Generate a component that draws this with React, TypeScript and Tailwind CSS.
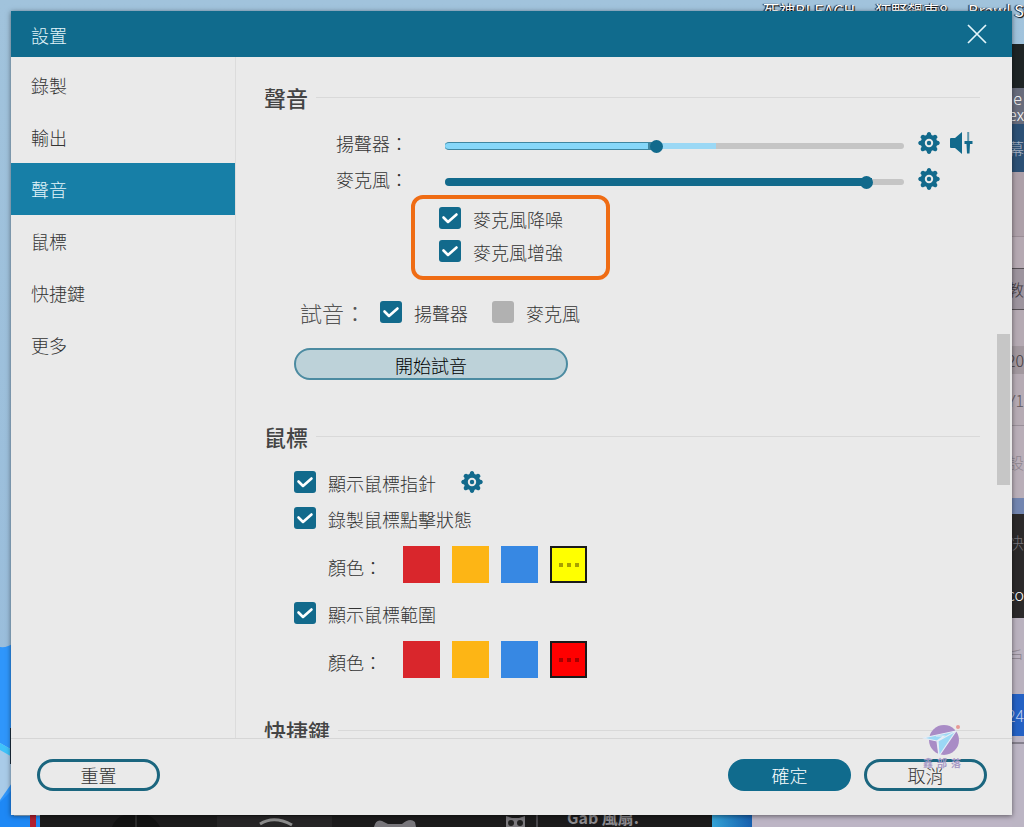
import { FC, ReactNode, useState } from "react";

const menu = ["錄製", "輸出", "聲音", "鼠標", "快捷鍵", "更多"];

// strips of the windows that stay visible right of the dialog
const sideStrips = [
  { id: "sky", text: "", style: "h-11" },
  { id: "bar", text: "", style: "h-11 bg-[#1e2425]" },
  { id: "name", text: "ue lex", style: "h-9 bg-[#686c7c] text-white" },
  { id: "screen", text: "幕", style: "h-12 bg-[#2c5075] text-[#a9b3c4]" },
  { id: "a", text: "", style: "h-16 bg-[#ada0a9]" },
  { id: "b", text: "", style: "h-8 bg-[#b5a9b2] border-t border-[#9a8d96]" },
  { id: "c", text: "教", style: "h-[42px] bg-[#9d949e] border-y border-[#555055] text-[#3d383d]" },
  { id: "d", text: "", style: "h-9 bg-[#b5aab3]" },
  { id: "e", text: "20", style: "h-7 bg-[#a2989f] text-[#443e44]" },
  { id: "f", text: "Y1", style: "h-[52px] bg-[#b6abb4] border-b border-[#9a909a] text-[#5f5860]" },
  { id: "g", text: "設", style: "h-[72px] bg-[#b9aeb8] text-[#8f8791]" },
  { id: "h", text: "", style: "h-4 bg-[#7285b0]" },
  { id: "i", text: "快", style: "h-14 bg-[#2b292a] text-[#77747a]" },
  { id: "j", text: "co", style: "h-12 bg-[#2b292a] text-white" },
  { id: "k", text: "戶", style: "h-[76px] bg-[#bab2bf] text-[#8a828d]" },
  { id: "l", text: "24", style: "h-[42px] bg-[#2461c4] text-[#c6d3f0]" },
  { id: "m", text: "", style: "h-2 border-b-2 border-[#85808d] bg-[#bcb5c4]" },
  { id: "n", text: "", style: "grow bg-[#bcb5c4]" },
];

const Desktop: FC = () => (
  <div
    aria-hidden="true"
    className="absolute inset-0 overflow-hidden bg-gradient-to-b from-[#a1c3dc] to-[#98bcdb]"
  >
    <svg className="absolute bottom-0 left-0 h-[187px] w-10" viewBox="0 0 40 187">
      <path d="M0 7Q7 8 14 3V187H0Z" fill="#2f96fb" />
      <path d="M0 103L14 111V140L0 160Z" fill="#a9cbe8" />
      <path d="M0 103L14 111V118L0 110Z" fill="#3fc2fa" />
      <path d="M0 162L14 148V176H40V187H0Z" fill="#1e88f5" />
      <path d="M10 88H12V124H10Z" fill="#1d3040" />
      <path d="M30 170H36V187H30Z" fill="#b3202f" />
    </svg>
    <div className="absolute right-0 bottom-0 left-10 flex h-4 bg-[#bdb5c5]">
      <div className="relative w-[672px] overflow-hidden bg-[#1c1b1c]">
        <svg className="absolute inset-0 h-4 w-full" viewBox="0 0 672 16">
          <path d="M72 16Q76 6 84 4H108Q116 8 120 16Z" fill="#121212" />
          <path d="M96 4V16" stroke="#444" />
          <path d="M177 5H292V16H177Z" fill="#262526" />
          <path d="M220 13Q234 4 252 14" stroke="#8b8b8b" strokeWidth="3" fill="none" />
          <path d="M334 16Q336 8 342 10L348 13H362Q370 6 375 11L376 16Z" fill="#77757a" />
          <path d="M466 5L472 7H479L485 5V16H466Z" fill="#7b797d" />
          <circle cx="471" cy="12" r="3" fill="#222" />
          <circle cx="480" cy="12" r="3" fill="#222" />
          <path d="M497 4V16" stroke="#77757a" />
        </svg>
        <span className="absolute bottom-0 left-[527px] text-base leading-5 font-bold text-[#8d8b8f]">
          Gab 風扇.
        </span>
      </div>
      <div className="w-10 bg-gradient-to-r from-[#35a3d6] to-[#175fae]" />
    </div>
    <div className="absolute inset-y-0 right-0 flex w-3 flex-col text-base leading-4">
      {sideStrips.map((strip) => (
        <div
          key={strip.id}
          className={`flex shrink-0 flex-wrap items-center justify-end overflow-hidden ${strip.style}`}
        >
          {strip.text}
        </div>
      ))}
    </div>
    <div className="absolute top-0 right-0 flex gap-5 text-base leading-5 font-normal whitespace-nowrap text-white [text-shadow:1px_1px_1px_#000,-1px_0_1px_#000]">
      <span>死神BLEACH</span>
      <span>狂野飆車8</span>
      <span className="w-14">Brawl St</span>
    </div>
  </div>
);

type CheckProps = { label: string; on?: boolean };

const Check: FC<CheckProps> = ({ label, on = true }) => {
  const [checked, setChecked] = useState(on);
  return (
    <label className="flex items-center gap-3">
      <span className="relative flex size-[22px]">
        <input
          type="checkbox"
          checked={checked}
          onChange={() => setChecked(!checked)}
          className="peer size-[22px] appearance-none rounded-[3px] bg-[#b1b1b1] checked:bg-[#126a8c]"
        />
        <svg
          viewBox="0 0 22 22"
          className="pointer-events-none absolute inset-0 hidden peer-checked:block"
        >
          <path
            d="M4.5 10.5L9 15L17.5 7.5"
            fill="none"
            stroke="#fff"
            strokeWidth="2.6"
            strokeLinecap="round"
            strokeLinejoin="round"
          />
        </svg>
      </span>
      <span className="pt-0.5">{label}</span>
    </label>
  );
};

const GearButton: FC<{ label: string }> = ({ label }) => (
  <button aria-label={label} className="size-6 text-[#126a8c]">
    <svg viewBox="0 0 24 24" fill="currentColor">
      {[0, 45, 90, 135, 180, 225, 270, 315].map((angle) => (
        <path
          key={angle}
          d="M9 5.5L10.2 2Q12 .2 13.8 2L15 5.5Z"
          transform={`rotate(${angle} 12 12)`}
        />
      ))}
      <circle cx="12" cy="12" r="8.2" />
      <circle cx="12" cy="12" r="3.2" fill="none" stroke="#eaeaea" strokeWidth="2" />
    </svg>
  </button>
);

type VolumeProps = {
  id: string;
  label: string;
  start: number;
  level?: number;
  children: ReactNode;
};

const Volume: FC<VolumeProps> = ({ id, label, start, level, children }) => {
  const [value, setValue] = useState(start);
  return (
    <div className="ml-[72px] flex h-8 items-center">
      <label htmlFor={id} className="w-[109px] shrink-0">
        {label}
      </label>
      <div className="relative mt-1.5 h-2 grow">
        <div className="absolute inset-x-0 top-px h-1.5 rounded-full bg-[#c5c5c5]" />
        {level && (
          <div
            className="absolute top-px left-0 h-1.5 bg-[#9bd8f5]"
            style={{ width: `${level}%` }}
          />
        )}
        <div
          className={`absolute top-0 left-0 h-2 rounded-l-full ${
            level ? "border-y border-r-8 border-[#3f86a0] bg-[#86d7f9]" : "bg-[#126a8c]"
          }`}
          style={{ width: `${value}%` }}
        />
        <input
          id={id}
          type="range"
          value={value}
          onChange={(e) => setValue(Number(e.target.value))}
          className="absolute inset-x-0 top-0 h-2 w-full appearance-none bg-transparent [&::-webkit-slider-thumb]:size-[13px] [&::-webkit-slider-thumb]:appearance-none [&::-webkit-slider-thumb]:rounded-full [&::-webkit-slider-thumb]:bg-[#126a8c]"
        />
      </div>
      <div className="flex w-[76px] shrink-0 items-center gap-2 pl-[13px]">{children}</div>
    </div>
  );
};

const Heading: FC<{ title: string }> = ({ title }) => (
  <div className="flex h-8 shrink-0 items-center gap-2">
    <h2 className="text-[22px] leading-8 font-medium text-[#444]">{title}</h2>
    <div className="h-px grow bg-[#d9d9d9]" />
  </div>
);

const Colors: FC<{ custom: string; name: string }> = ({ custom, name }) => (
  <div className="mt-3 ml-16 flex items-center">
    <span className="w-[75px] pt-1">顏色：</span>
    <div className="flex gap-3">
      <button aria-label={`${name} red`} className="size-[37px] bg-[#d9262c]" />
      <button aria-label={`${name} orange`} className="size-[37px] bg-[#fdb515]" />
      <button aria-label={`${name} blue`} className="size-[37px] bg-[#3788e3]" />
      <button
        aria-label={`${name} custom`}
        className={`flex size-[37px] items-center justify-center gap-1 border-2 border-[#1a1a1a] ${custom}`}
      >
        <i className="size-1 bg-current" />
        <i className="size-1 bg-current" />
        <i className="size-1 bg-current" />
      </button>
    </div>
  </div>
);

const Watermark: FC = () => (
  <div className="pointer-events-none absolute -top-4 right-[50px] flex w-10 flex-col items-center">
    <svg viewBox="0 0 40 34" className="h-[34px] w-10">
      <circle cx="22" cy="17" r="15" fill="#a98cc6" />
      <circle cx="36" cy="4" r="2" fill="#e79a96" />
      <path
        d="M1 15L34 8L17 33L15 18Z"
        fill="#9bd8f5"
        stroke="#e6edf6"
        strokeWidth="1.2"
        strokeLinejoin="round"
      />
      <path d="M14 13H22L15 18M17 33L16 18L34 8" fill="none" stroke="#e6edf6" strokeWidth="1.2" />
    </svg>
    <div className="flex gap-1 text-[10px] leading-3 font-bold text-[#a79ac6]">
      <span>鑫</span>
      <span>部</span>
      <span>落</span>
    </div>
  </div>
);

const App: FC = () => {
  const [active, setActive] = useState("聲音");

  return (
    <div className="relative flex h-screen pt-[11px] pr-3 pb-3 pl-[11px] font-['Noto_Sans_CJK_TC',sans-serif] text-lg leading-6 font-light text-[#333]">
      <Desktop />
      <div
        role="dialog"
        aria-labelledby="title"
        className="relative flex min-w-0 grow flex-col bg-[#eaeaea] shadow-[0_1px_5px_rgba(0,0,0,0.5)]"
      >
        <header className="flex h-[46px] shrink-0 items-center justify-between bg-[#106b8d] pr-6 pl-5 text-[#e3f5fa]">
          <h1 id="title" className="pt-0.5">
            設置
          </h1>
          <button aria-label="關閉">
            <svg viewBox="0 0 22 22" className="size-[22px]">
              <path d="M2 2L20 20M20 2L2 20" stroke="currentColor" strokeWidth="1.7" />
            </svg>
          </button>
        </header>

        <div className="flex min-h-0 grow">
          <nav className="flex w-[225px] shrink-0 flex-col border-r border-[#dcdcdc] pt-0.5">
            {menu.map((item) => (
              <button
                key={item}
                onClick={() => setActive(item)}
                className={`h-[52px] pl-5 text-left ${
                  item === active ? "bg-[#177fa7] text-[#e3f5fa]" : ""
                }`}
              >
                {item}
              </button>
            ))}
          </nav>

          <main className="flex min-w-0 grow flex-col overflow-hidden pt-6 pr-4 pl-7">
            <Heading title="聲音" />
            <div className="mt-3.5 flex flex-col gap-1">
              <Volume id="speaker" label="揚聲器：" start={46} level={59}>
                <GearButton label="揚聲器設定" />
                <button aria-label="音量平衡" className="size-6 text-[#126a8c]">
                  <svg viewBox="0 0 24 24" fill="currentColor">
                    <path d="M2 7H6L13 1V23L6 17H2Q1 17 1 16V8Q1 7 2 7Z" />
                    <path d="M18.2 1H20.2V11H18.2Z" opacity=".65" />
                    <path d="M15.5 10H23.5V13H21L20.5 22.5H18L17.5 13H15.5Z" />
                  </svg>
                </button>
              </Volume>
              <Volume id="mic" label="麥克風：" start={93}>
                <GearButton label="麥克風設定" />
              </Volume>
            </div>
            <div className="ml-[147px] flex shrink-0 flex-col gap-[7px] self-start rounded-xl border-4 border-[#ef6c14] pt-1.5 pr-[43px] pb-3 pl-6">
              <Check label="麥克風降噪" />
              <Check label="麥克風增強" />
            </div>
            <div className="mt-4 ml-9 flex h-8 shrink-0 items-center gap-6">
              <div className="flex items-center gap-3.5">
                <span className="text-[22px] text-[#555]">試音：</span>
                <Check label="揚聲器" />
              </div>
              <Check label="麥克風" on={false} />
            </div>
            <button className="mt-5 ml-[30px] h-8 w-[274px] shrink-0 rounded-full border-2 border-[#4c8ba1] bg-[#bdd2d9] pt-0.5 leading-6 text-black">
              開始試音
            </button>

            <div className="mt-10 shrink-0">
              <Heading title="鼠標" />
              <div className="mt-3.5 ml-[30px] flex h-8 items-center gap-6">
                <Check label="顯示鼠標指針" />
                <GearButton label="指針設定" />
              </div>
              <div className="mt-1 ml-[30px] flex h-8 items-center">
                <Check label="錄製鼠標點擊狀態" />
              </div>
              <Colors name="click" custom="bg-[#ffff00] text-[#a8a000]" />
              <div className="mt-3.5 ml-[30px] flex h-8 items-center">
                <Check label="顯示鼠標範圍" />
              </div>
              <Colors name="area" custom="bg-[#ff0000] text-[#a80000]" />
            </div>

            <div className="mt-9 shrink-0">
              <Heading title="快捷鍵" />
            </div>
          </main>

          <div className="w-4 shrink-0 pr-0.5 pl-px">
            <div className="mt-[277px] h-[151px] bg-[#c6c6c6]" />
          </div>
        </div>

        <footer className="relative flex h-[77px] shrink-0 items-center gap-[13px] border-t border-[#d6d6d6] pr-[25px] pb-1 pl-[26px]">
          <button className="mr-auto h-8 w-[123px] rounded-full border-3 border-[#1b667f]">
            重置
          </button>
          <button className="h-8 w-[123px] rounded-full bg-[#106b8d] text-white">確定</button>
          <button className="h-8 w-[123px] rounded-full border-3 border-[#1b667f]">取消</button>
          <Watermark />
        </footer>
      </div>
    </div>
  );
};

export default App;
